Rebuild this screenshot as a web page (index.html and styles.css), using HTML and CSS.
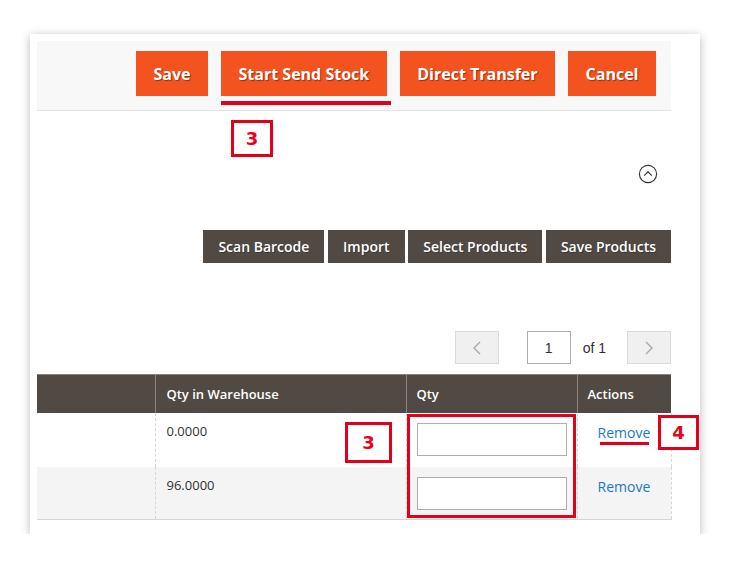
FILE: index.html
```html
<!DOCTYPE html>
<html>
<head>
<meta charset="utf-8">
<link rel="stylesheet" href="styles.css">
</head>
<body>
<div class="card">
  <div class="actionbar">
    <button class="btn-primary">Save</button>
    <button class="btn-primary">Start Send Stock</button>
    <button class="btn-primary">Direct Transfer</button>
    <button class="btn-primary">Cancel</button>
  </div>
  <div class="collapse-row">
    <svg class="collapse-icon" width="20" height="20" viewBox="0 0 20 20">
      <circle cx="10" cy="10" r="8.6" fill="none" stroke="#333" stroke-width="1.1"/>
      <path d="M6.2 11.6 L10 7.9 L13.8 11.6" fill="none" stroke="#333" stroke-width="1.2"/>
    </svg>
  </div>
  <div class="tools">
    <button class="btn-dark">Scan Barcode</button>
    <button class="btn-dark">Import</button>
    <button class="btn-dark">Select Products</button>
    <button class="btn-dark">Save Products</button>
  </div>
  <div class="pager">
    <button class="pg-btn"><svg width="10" height="16" viewBox="0 0 10 16"><path d="M8 2 L2 8 L8 14" fill="none" stroke="#a8a8a8" stroke-width="1.4"/></svg></button>
    <input class="pg-input" value="1">
    <span class="pg-of">of 1</span>
    <button class="pg-btn"><svg width="10" height="16" viewBox="0 0 10 16"><path d="M2 2 L8 8 L2 14" fill="none" stroke="#a8a8a8" stroke-width="1.4"/></svg></button>
  </div>
  <table class="grid">
    <thead>
      <tr>
        <th class="c1"></th>
        <th class="c2">Qty in Warehouse</th>
        <th class="c3">Qty</th>
        <th class="c4">Actions</th>
      </tr>
    </thead>
    <tbody>
      <tr>
        <td class="c1"></td>
        <td class="c2">0.0000</td>
        <td class="c3"><input class="qty"></td>
        <td class="c4"><a class="remove">Remove</a></td>
      </tr>
      <tr class="alt">
        <td class="c1"></td>
        <td class="c2">96.0000</td>
        <td class="c3"><input class="qty"></td>
        <td class="c4"><a class="remove">Remove</a></td>
      </tr>
    </tbody>
  </table>

  <div class="mark underline-send"></div>
  <div class="mark box box-3a">3</div>
  <div class="mark box box-3b">3</div>
  <div class="mark qty-frame"></div>
  <div class="mark box box-4">4</div>
  <div class="mark underline-remove"></div>
</div>
</body>
</html>
```

FILE: styles.css
```css
* { box-sizing: border-box; }
html, body { margin: 0; padding: 0; background: #fff; }
body { font-family: "Open Sans", "Liberation Sans", sans-serif; color: #303030; }

.card {
  position: relative;
  margin: 34px 0 0 30px;
  width: 670px;
  height: 500px;
  padding: 7px 29px 7px 7px;
  background: #fff;
  box-shadow: 0 2px 9px rgba(0,0,0,0.28);
}

.actionbar {
  height: 70px;
  background: #f8f8f8;
  border-bottom: 1px solid #e3e3e3;
  display: flex;
  justify-content: flex-end;
  align-items: flex-start;
  gap: 13px;
  padding: 10px 15px 0 0;
}
.btn-primary {
  height: 45px;
  border: 0;
  background: #f2531f;
  color: #fff;
  font-family: "Open Sans", sans-serif;
  font-weight: 700;
  font-size: 16px;
  padding: 0 17.5px;
  text-shadow: 1px 1px 1px rgba(0,0,0,0.4);
}

.collapse-row {
  display: flex;
  justify-content: flex-end;
  padding: 53px 13px 0 0;
  height: 119px;
}
.collapse-icon { display: block; }

.tools {
  display: flex;
  justify-content: flex-end;
  gap: 3.7px;
}
.btn-dark {
  height: 33px;
  border: 0;
  background: #514943;
  color: #fff;
  font-family: "Open Sans", sans-serif;
  font-weight: 600;
  font-size: 14px;
  padding: 0 15px;
  text-shadow: 1px 1px 0 rgba(0,0,0,0.25);
}

.pager {
  display: flex;
  justify-content: flex-end;
  align-items: center;
  margin-top: 68px;
  height: 33px;
}
.pg-btn {
  width: 44px;
  height: 33px;
  background: #f0f0f0;
  border: 1px solid #dadada;
  display: flex;
  align-items: center;
  justify-content: center;
  padding: 0;
}
.pg-input {
  width: 44px;
  height: 33px;
  margin-left: 28px;
  border: 1px solid #adadad;
  text-align: center;
  font-family: "Liberation Sans", Arial, sans-serif;
  font-size: 14px;
  color: #303030;
  padding: 0;
}
.pg-of {
  font-family: "Liberation Sans", Arial, sans-serif;
  font-size: 14px;
  color: #303030;
  margin: 0 21px 0 12px;
}

.grid {
  margin-top: 10px;
  width: 634px;
  border-collapse: collapse;
  table-layout: fixed;
  font-size: 13px;
}
.grid th {
  height: 38px;
  background: #514943;
  color: #fff;
  font-weight: 600;
  text-align: left;
  padding: 0 10px;
  border-left: 1px solid #8a837e;
  border-right: 1px solid #8a837e;
  border-top: 1px solid #8a837e;
}
.grid th:first-child { border-left: 0; }
.grid th:last-child { border-right: 0; }
.grid th.c2 { padding-left: 11px; }
.c1 { width: 118px; }
.c2 { width: 251px; }
.c3 { width: 171px; }
.c4 { width: 94px; }
.grid td {
  height: 54px;
  vertical-align: top;
  padding: 10px 10px 0 10px;
  border-left: 1px dashed #d6d6d6;
  border-right: 1px dashed #d6d6d6;
  color: #303030;
}
.grid td:first-child { border-left: 0; }
.grid td.c2 { padding-left: 11px; padding-top: 9px; }
.grid tbody tr.alt td { background: #f4f4f4; height: 53px; border-bottom: 1px solid #d6d6d6; }
.qty {
  display: block;
  width: 150px;
  height: 33px;
  border: 1px solid #adadad;
  background: #fff;
}
.grid td.c4 { padding-left: 20px; padding-top: 10px; }
.remove {
  color: #1979c3;
  font-size: 14px;
  text-decoration: none;
}

/* annotations */
.mark { position: absolute; }
.box {
  border: 3px solid #e2001a;
  color: #e8001c;
  font-family: "DejaVu Sans", sans-serif;
  font-weight: 700;
  font-size: 18px;
  display: flex;
  align-items: center;
  justify-content: center;
  background: #fff;
}
.underline-send { left: 191px; top: 67px; width: 170px; height: 4px; background: #e2001a; }
.box-3a { left: 201px; top: 86px; width: 42px; height: 37px; }
.box-3b { left: 315px; top: 388px; width: 47px; height: 41px; }
.qty-frame { left: 377px; top: 380px; width: 169px; height: 104px; border: 3px solid #e2001a; }
.box-4 { left: 628px; top: 381px; width: 41px; height: 35px; }
.underline-remove { left: 570px; top: 408px; width: 49px; height: 3px; background: #e2001a; }
```
